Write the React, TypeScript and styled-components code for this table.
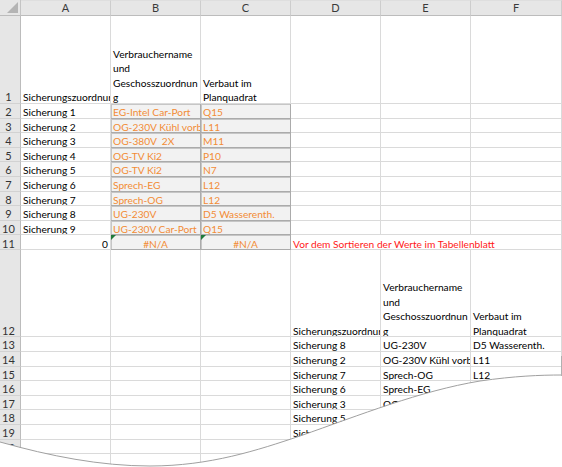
import React from "react";
import styled, { createGlobalStyle, css } from "styled-components";

const Global = createGlobalStyle`
  html, body { margin: 0; padding: 0; background: #ffffff; }
  body { overflow: hidden; font-family: Lato, "Liberation Sans", sans-serif; }
`;

const ROW_H = 14.6;
const COLS = ["A", "B", "C", "D", "E", "F"];
const COL_W = [90, 90, 90, 90, 90, 91];

type Tone = "plain" | "input";
type Align = "left" | "right" | "center";

interface CellSpec {
  text?: string;
  lines?: string[];
  tone?: Tone;
  align?: Align;
  color?: string;
  span?: number;
  err?: boolean;
}

interface RowSpec {
  h: number;
  cells: CellSpec[];
}

const ORANGE = "#f28c35";

const Frame = styled.div`
  position: relative;
  width: 562px;
  height: 467px;
  overflow: hidden;
  background: #ffffff;
`;

const Sheet = styled.div<{ $rows: string }>`
  display: grid;
  grid-template-columns: 21px ${COL_W.map((w) => `${w}px`).join(" ")};
  grid-template-rows: 16px ${(p) => p.$rows};
  font-size: 10.2px;
  color: #000000;
`;

const Corner = styled.div`
  position: relative;
  background: #e6e6e6;
  border-right: 1px solid #c4c4c4;
  border-bottom: 1px solid #bcbcbc;
  box-sizing: border-box;
  &::after {
    content: "";
    position: absolute;
    right: 2px;
    bottom: 2px;
    width: 0;
    height: 0;
    border-left: 11px solid transparent;
    border-bottom: 11px solid #b4b4b4;
  }
`;

const ColHeader = styled.div`
  display: flex;
  align-items: center;
  justify-content: center;
  background: #e6e6e6;
  border-right: 1px solid #cdcdcd;
  border-bottom: 1px solid #bcbcbc;
  border-top: 1px solid #dedede;
  box-sizing: border-box;
  color: #3a3a3a;
  font-size: 11px;
  line-height: 14px;
`;

const RowHeader = styled.div`
  display: flex;
  flex-direction: column;
  align-items: center;
  justify-content: flex-end;
  padding-right: 3px;
  background: #e6e6e6;
  border-right: 1px solid #bcbcbc;
  border-bottom: 1px solid #d2d2d2;
  box-sizing: border-box;
  color: #333333;
  font-size: 11px;
  overflow: hidden;
`;

const Num = styled.span`
  display: block;
  line-height: ${ROW_H}px;
  margin-bottom: -2px;
`;

const Cell = styled.div<{ $tone: Tone; $align: Align; $color: string; $span: number }>`
  position: relative;
  display: flex;
  flex-direction: column;
  justify-content: flex-end;
  align-items: ${(p) => (p.$align === "right" ? "flex-end" : p.$align === "center" ? "center" : "flex-start")};
  grid-column: span ${(p) => p.$span};
  min-width: 0;
  overflow: hidden;
  box-sizing: border-box;
  padding: 0 2px;
  color: ${(p) => p.$color};
  border-right: 1px solid #dadada;
  border-bottom: 1px solid #dadada;
  ${(p) =>
    p.$tone === "input" &&
    css`
      background: #f2f2f2;
      border-right: 1px solid #ababab;
      border-bottom: 1px solid #ababab;
      box-shadow: inset 1px 1px 0 #c6c6c6;
    `}
`;

const Text = styled.span`
  display: block;
  white-space: pre;
  line-height: ${ROW_H}px;
  margin-bottom: -2px;
`;

const Line = styled.span`
  display: block;
  white-space: pre;
`;

const ErrorMark = styled.span`
  position: absolute;
  left: 0;
  top: 0;
  width: 0;
  height: 0;
  border-top: 5px solid #1f7a3a;
  border-right: 5px solid transparent;
`;

const Tear = styled.svg`
  position: absolute;
  left: 0;
  top: 0;
  pointer-events: none;
`;

const empty = (n: number): CellSpec[] => Array.from({ length: n }, () => ({}));

const headerLines = {
  a: ["Sicherungszuordnur"],
  b: ["Verbrauchername", "und", "Geschosszuordnun", "g"],
  c: ["Verbaut im", "Planquadrat"],
};

const topData: [string, string, string][] = [
  ["Sicherung 1", "EG-Intel Car-Port", "Q15"],
  ["Sicherung 2", "OG-230V Kühl vorb", "L11"],
  ["Sicherung 3", "OG-380V  2X", "M11"],
  ["Sicherung 4", "OG-TV Ki2", "P10"],
  ["Sicherung 5", "OG-TV Ki2", "N7"],
  ["Sicherung 6", "Sprech-EG", "L12"],
  ["Sicherung 7", "Sprech-OG", "L12"],
  ["Sicherung 8", "UG-230V", "D5 Wasserenth."],
  ["Sicherung 9", "UG-230V Car-Port", "Q15"],
];

const sortedData: [string, string, string][] = [
  ["Sicherung 8", "UG-230V", "D5 Wasserenth."],
  ["Sicherung 2", "OG-230V Kühl vorb", "L11"],
  ["Sicherung 7", "Sprech-OG", "L12"],
  ["Sicherung 6", "Sprech-EG", "L12"],
  ["Sicherung 3", "OG-380V  2X", "M11"],
  ["Sicherung 5", "OG-TV Ki2", "N7"],
  ["Sicherung 4", "OG-TV Ki2", "P10"],
];

const rows: RowSpec[] = [
  {
    h: 88,
    cells: [{ lines: headerLines.a }, { lines: headerLines.b }, { lines: headerLines.c }, ...empty(3)],
  },
  ...topData.map(([a, b, c]) => ({
    h: ROW_H,
    cells: [
      { text: a },
      { text: b, tone: "input" as Tone, color: ORANGE },
      { text: c, tone: "input" as Tone, color: ORANGE },
      ...empty(3),
    ],
  })),
  {
    h: 15,
    cells: [
      { text: "0", align: "right" as Align },
      { text: "#N/A", tone: "input" as Tone, color: ORANGE, align: "center" as Align, err: true },
      { text: "#N/A", tone: "input" as Tone, color: ORANGE, align: "center" as Align, err: true },
      { text: "Vor dem Sortieren der Werte im Tabellenblatt", color: "#ff1a1a", span: 3 },
    ],
  },
  {
    h: 87,
    cells: [...empty(3), { lines: headerLines.a }, { lines: headerLines.b }, { lines: headerLines.c }],
  },
  ...sortedData.map(([a, b, c]) => ({
    h: ROW_H,
    cells: [...empty(3), { text: a }, { text: b }, { text: c }],
  })),
  { h: ROW_H, cells: empty(6) },
  { h: ROW_H, cells: empty(6) },
];

export default function App() {
  const template = rows.map((r) => `${r.h}px`).join(" ");
  return (
    <>
      <Global />
      <Frame>
        <Sheet $rows={template}>
          <Corner />
          {COLS.map((c) => (
            <ColHeader key={c}>{c}</ColHeader>
          ))}
          {rows.map((row, ri) => (
            <React.Fragment key={ri}>
              <RowHeader>
                <Num>{ri + 1}</Num>
              </RowHeader>
              {row.cells.map((cell, ci) => (
                <Cell
                  key={ci}
                  $tone={cell.tone ?? "plain"}
                  $align={cell.align ?? "left"}
                  $color={cell.color ?? "#000000"}
                  $span={cell.span ?? 1}
                >
                  {cell.err && <ErrorMark />}
                  {cell.lines ? (
                    <Text>
                      {cell.lines.map((l, li) => (
                        <Line key={li}>{l}</Line>
                      ))}
                    </Text>
                  ) : (
                    cell.text !== undefined && <Text>{cell.text}</Text>
                  )}
                </Cell>
              ))}
            </React.Fragment>
          ))}
        </Sheet>
        <Tear width="562" height="467" viewBox="0 0 562 467">
          <path
            d="M0,442 C50,456 100,466 150,466 C210,466 258,450 300,436 C360,415 420,391 480,381 C515,376 540,375 562,375 L562,467 L0,467 Z"
            fill="#ffffff"
          />
          <path
            d="M0,442 C50,456 100,466 150,466 C210,466 258,450 300,436 C360,415 420,391 480,381 C515,376 540,375 562,375"
            fill="none"
            stroke="#a0a0a0"
            strokeWidth="1"
          />
          <line x1="561.5" y1="356" x2="561.5" y2="376" stroke="#b0b0b0" strokeWidth="1" />
        </Tear>
      </Frame>
    </>
  );
}
